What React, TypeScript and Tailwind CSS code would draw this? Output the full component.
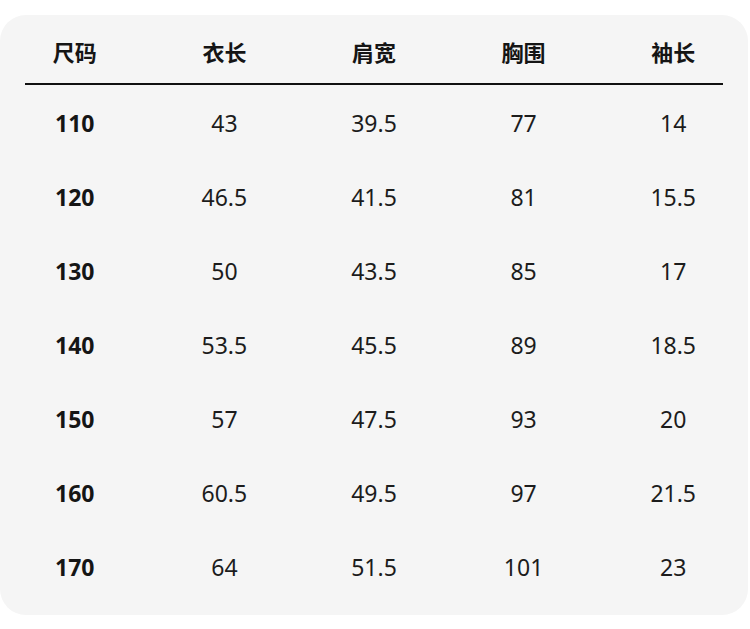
const headers = ['尺码', '衣长', '肩宽', '胸围', '袖长'];

const rows = [
    ['110', '43', '39.5', '77', '14'],
    ['120', '46.5', '41.5', '81', '15.5'],
    ['130', '50', '43.5', '85', '17'],
    ['140', '53.5', '45.5', '89', '18.5'],
    ['150', '57', '47.5', '93', '20'],
    ['160', '60.5', '49.5', '97', '21.5'],
    ['170', '64', '51.5', '101', '23'],
];

export default function App() {
    return (
        <div className="w-[750px] h-[629px] bg-white pt-[15px] pr-[2px] font-['Noto_Sans','Noto_Sans_CJK_SC',sans-serif] text-[#151515]">
            <div className="h-[600px] rounded-[26px] bg-[#f5f5f5]">
                <div className="grid grid-cols-5 h-[68px] pt-[26px]">
                    {headers.map(h => (
                        <div key={h} className="text-center text-[22px] leading-[22px] font-bold">
                            {h}
                        </div>
                    ))}
                </div>
                <div className="mx-[25px] border-b-2 border-[#111]" />
                <div className="pt-[1px]">
                    {rows.map(row => (
                        <div key={row[0]} className="grid grid-cols-5 h-[74px] items-center">
                            {row.map((cell, i) => (
                                <div
                                    key={i}
                                    className={i === 0 ? 'text-center text-[23px] font-bold' : 'text-center text-[23px] text-[#1c1c1c]'}
                                >
                                    {cell}
                                </div>
                            ))}
                        </div>
                    ))}
                </div>
            </div>
        </div>
    );
}
